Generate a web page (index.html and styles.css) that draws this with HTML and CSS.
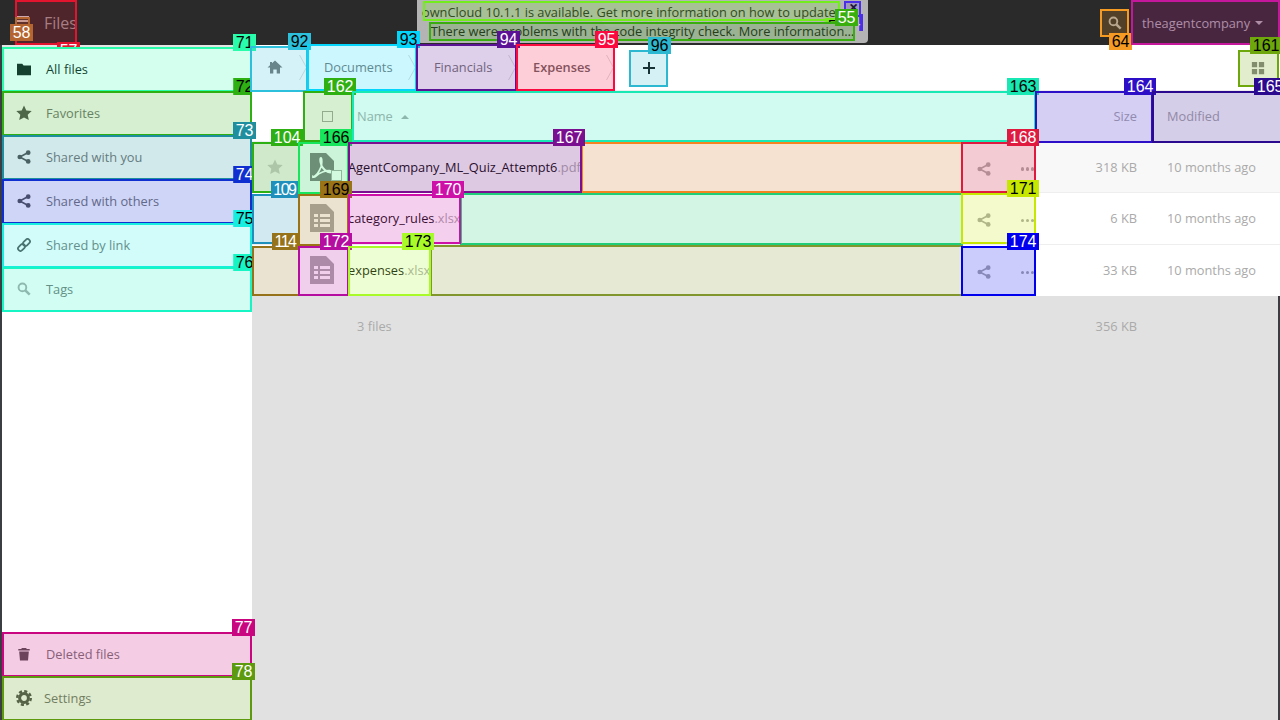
FILE: index.html
```html
<!DOCTYPE html>
<html lang="en">
<head>
  <meta charset="UTF-8" />
  <meta name="viewport" content="width=device-width, initial-scale=1.0" />
  <title>Files - ownCloud</title>
  <link rel="stylesheet" href="styles.css">
</head>
<body>
  <svg class="sprite" aria-hidden="true">
    <symbol id="i-folder" viewBox="0 0 16 16"><path d="M0 2h6l1.500 2H16v11H0z"/></symbol>
    <symbol id="i-star" viewBox="0 0 16 16"><path d="M8 .5l2.300 5 5.400.6-4 3.600 1.100 5.400L8 12.400l-4.800 2.700 1.100-5.400-4-3.600 5.400-.6z"/></symbol>
    <symbol id="i-share" viewBox="0 0 16 16"><path d="M3.200 8L12.800 2.900M3.200 8l9.600 5.100" fill="none" stroke="currentColor" stroke-width="1.800"/><circle cx="3.200" cy="8" r="2.700"/><circle cx="12.800" cy="3" r="2.700"/><circle cx="12.800" cy="13" r="2.700"/></symbol>
    <symbol id="i-link" viewBox="0 0 16 16"><g fill="none" stroke="currentColor" stroke-width="2"><rect x=".7" y="8.050" width="9" height="5.500" rx="2.750" transform="rotate(-45 5.200 10.800)"/><rect x="6.300" y="2.450" width="9" height="5.500" rx="2.750" transform="rotate(-45 10.800 5.200)"/></g></symbol>
    <symbol id="i-search" viewBox="0 0 16 16"><circle cx="6.200" cy="6.200" r="4.400" fill="none" stroke="currentColor" stroke-width="2.200"/><path d="M9.500 9.500l5 5" fill="none" stroke="currentColor" stroke-width="2.800"/></symbol>
    <symbol id="i-trash" viewBox="0 0 16 16"><path d="M5.500 1h5l.6 1.200H14.500V4h-13V2.200h3.400zM2.500 5h11l-.9 10.500H3.400z"/></symbol>
    <symbol id="i-gear" viewBox="0 0 16 16"><circle cx="8" cy="8" r="4.400" fill="none" stroke="currentColor" stroke-width="3"/><circle cx="8" cy="8" r="6.800" fill="none" stroke="currentColor" stroke-width="2.400" stroke-dasharray="3.100 2.240"/></symbol>
    <symbol id="i-home" viewBox="0 0 16 16"><path d="M8 1.500l7.500 7H13v6H9.700v-4H6.300v4H3v-6H.5l2.500-2.300V3h2v1.300z"/></symbol>
    <symbol id="i-grid" viewBox="0 0 16 16"><path d="M1 1h6v6H1zM9 1h6v6H9zM1 9h6v6H1zM9 9h6v6H9z"/></symbol>
    <symbol id="i-pdf" viewBox="0 0 24 28"><path d="M0 0h16l8 8v20H0z"/><path d="M3 24c3-1 6-5 8-10 1-3 1-8 .2-9-1.200-.6-1.500 3 0 7 2 4 5 7 9 7.500 1.800 0 1.500-1.700-.7-1.800-4-.2-10 2-13 5-2 2-3.500 1-3.500 1z" fill="none" stroke="#fff" stroke-width="1.800"/></symbol>
    <symbol id="i-sheet" viewBox="0 0 24 28"><path d="M0 0h16l8 8v20H0z"/><path d="M4 10h4v3H4zM10 10h10v3H10zM4 15h4v3H4zM10 15h10v3H10zM4 20h4v3H4zM10 20h10v3H10z" fill="#fff"/></symbol>
    <symbol id="i-chev" viewBox="0 0 8 25"><path d="M.5 0L7.500 12.500.5 25" fill="none" stroke="#ddd"/></symbol>
  </svg>

  <header class="topbar">
    <button class="menu-btn" aria-label="Menu"><span></span><span></span></button>
    <span class="app-name">Files</span>
    <div class="notify">
      <i class="notify-cloud"></i>
      <span class="notify-logo">ownCloud</span>
      <p class="notify-line first">ownCloud 10.1.1 is available. Get more information on how to update.</p>
      <p class="notify-line">There were problems with the code integrity check. More information…</p>
      <span class="notify-close">×</span>
    </div>
    <div class="topbar-right">
      <svg class="ic search-ic"><use href="#i-search"/></svg>
      <span class="user">theagentcompany <i class="caret"></i></span>
    </div>
  </header>

  <div class="app">
    <nav class="sidebar">
      <a class="nav-item active"><svg class="ic"><use href="#i-folder"/></svg>All files</a>
      <a class="nav-item"><svg class="ic star"><use href="#i-star"/></svg>Favorites</a>
      <a class="nav-item"><svg class="ic"><use href="#i-share"/></svg>Shared with you</a>
      <a class="nav-item"><svg class="ic"><use href="#i-share"/></svg>Shared with others</a>
      <a class="nav-item"><svg class="ic"><use href="#i-link"/></svg>Shared by link</a>
      <a class="nav-item tags"><svg class="ic"><use href="#i-search"/></svg>Tags</a>
      <a class="nav-item push"><svg class="ic"><use href="#i-trash"/></svg>Deleted files</a>
      <a class="nav-item settings"><svg class="ic"><use href="#i-gear"/></svg>Settings</a>
    </nav>

    <main class="content">
      <div class="files">
        <div class="controls">
          <a class="crumb crumb-home"><svg class="ic"><use href="#i-home"/></svg><svg class="chev"><use href="#i-chev"/></svg></a>
          <a class="crumb">Documents<svg class="chev"><use href="#i-chev"/></svg></a>
          <a class="crumb">Financials<svg class="chev"><use href="#i-chev"/></svg></a>
          <a class="crumb current">Expenses<svg class="chev"><use href="#i-chev"/></svg></a>
          <button class="add-btn" aria-label="New"><svg viewBox="0 0 12 12"><path d="M6 0v12M0 6h12"/></svg></button>
          <button class="view-btn" aria-label="Grid view"><svg class="ic"><use href="#i-grid"/></svg></button>
        </div>

        <div class="list-head">
          <div class="head-spacer"></div>
          <div class="head-check"><i class="check"></i></div>
          <div class="head-name">Name <i class="sort-up"></i></div>
          <div class="col-size">Size</div>
          <div class="col-date">Modified</div>
        </div>

        <div class="file-row hovered">
          <div class="col-fav"><svg class="ic"><use href="#i-star"/></svg></div>
          <div class="col-thumb pdf"><svg class="thumb"><use href="#i-pdf"/></svg><i class="check row-check"></i></div>
          <div class="col-name">AgentCompany_ML_Quiz_Attempt6<span class="ext">.pdf</span></div>
          <div class="col-actions"><svg class="ic"><use href="#i-share"/></svg><span class="dots"><i></i><i></i><i></i></span></div>
          <div class="col-size">318 KB</div>
          <div class="col-date">10 months ago</div>
        </div>
        <div class="file-row">
          <div class="col-fav"></div>
          <div class="col-thumb"><svg class="thumb"><use href="#i-sheet"/></svg></div>
          <div class="col-name">category_rules<span class="ext">.xlsx</span></div>
          <div class="col-actions"><svg class="ic"><use href="#i-share"/></svg><span class="dots"><i></i><i></i><i></i></span></div>
          <div class="col-size">6 KB</div>
          <div class="col-date">10 months ago</div>
        </div>
        <div class="file-row">
          <div class="col-fav"></div>
          <div class="col-thumb"><svg class="thumb"><use href="#i-sheet"/></svg></div>
          <div class="col-name">expenses<span class="ext">.xlsx</span></div>
          <div class="col-actions"><svg class="ic"><use href="#i-share"/></svg><span class="dots"><i></i><i></i><i></i></span></div>
          <div class="col-size">33 KB</div>
          <div class="col-date">10 months ago</div>
        </div>
      </div>

      <div class="summary">
        <div class="summary-count">3 files</div>
        <div class="col-size">356 KB</div>
        <div class="col-date"></div>
      </div>
    </main>
  </div>

  <!-- numbered annotation boxes drawn over the page -->
  <div class="marks">
    <div class="mark m53 dark"><b>53</b></div>
    <div class="mark m54"><b>54</b></div>
    <div class="mark m55"><b>55</b></div>
    <div class="mark m57"><b>57</b></div>
    <div class="mark m58"><b>58</b></div>
    <div class="mark m64 dark"><b>64</b></div>
    <div class="mark m65"></div>
    <div class="mark m71 dark"><b>71</b></div>
    <div class="mark m72 dark"><b>72</b></div>
    <div class="mark m73"><b>73</b></div>
    <div class="mark m74"><b>74</b></div>
    <div class="mark m75 dark"><b>75</b></div>
    <div class="mark m76 dark"><b>76</b></div>
    <div class="mark m77"><b>77</b></div>
    <div class="mark m78"><b>78</b></div>
    <div class="mark m92 dark"><b>92</b></div>
    <div class="mark m93 dark"><b>93</b></div>
    <div class="mark m94"><b>94</b></div>
    <div class="mark m95"><b>95</b></div>
    <div class="mark m96 dark"><b>96</b></div>
    <div class="mark m104"><b>104</b></div>
    <div class="mark bar1"></div>
    <div class="mark m109"><b>109</b></div>
    <div class="mark bar2"></div>
    <div class="mark m114"><b>114</b></div>
    <div class="mark bar3"></div>
    <div class="mark m161 dark"><b>161</b></div>
    <div class="mark m162"><b>162</b></div>
    <div class="mark m163 dark"><b>163</b></div>
    <div class="mark m164"><b>164</b></div>
    <div class="mark m165"><b>165</b></div>
    <div class="mark m166 dark"><b>166</b></div>
    <div class="mark m167"><b>167</b></div>
    <div class="mark m168"><b>168</b></div>
    <div class="mark m169 dark"><b>169</b></div>
    <div class="mark m170"><b>170</b></div>
    <div class="mark m171 dark"><b>171</b></div>
    <div class="mark m172"><b>172</b></div>
    <div class="mark m173 dark"><b>173</b></div>
    <div class="mark m174"><b>174</b></div>
  </div>
</body>
</html>
```

FILE: styles.css
```css
body {
  margin: 0;
  height: 720px;
  overflow: hidden;
  position: relative;
  background-color: #3a3d42;
  font-family: "Open Sans", sans-serif;
  font-size: 12.8px;
  color: #777;
}
.sprite {
  display: none;
}
.ic {
  width: 14px;
  height: 14px;
  fill: currentColor;
  flex: none;
}
p {
  margin: 0;
}
button {
  border: none;
  background: none;
  padding: 0;
}

/* top bar */
.topbar {
  display: flex;
  align-items: center;
  height: 45px;
  background-color: #2a2a2a;
  color: #fff;
}
.menu-btn {
  display: flex;
  flex-direction: column;
  gap: 2px;
  width: 12px;
  margin: -8px 15px 0 17px;
}
.menu-btn span {
  height: 2px;
  background-color: #ccc;
}
.app-name {
  font-size: 16px;
  color: #999;
}
.notify {
  position: absolute;
  left: 417px;
  top: 0;
  width: 451px;
  height: 43px;
  box-sizing: border-box;
  padding-top: 3px;
  background-color: #b4b4b4;
  border-radius: 0 0 4px 4px;
  color: #222;
  text-align: center;
  line-height: 18px;
  white-space: nowrap;
}
.notify-line {
  position: relative;
  height: 19px;
}
.notify-line.first {
  padding-right: 24px;
}
.notify-logo {
  position: absolute;
  left: 223px;
  top: 10px;
  color: #bababa;
  font-size: 17px;
}
.notify-cloud {
  position: absolute;
  left: 185px;
  top: 13px;
  width: 34px;
  height: 14px;
  border-radius: 8px;
  background-color: #bababa;
}
.notify-close {
  position: absolute;
  left: 432px;
  top: 0;
  font-size: 16px;
  line-height: 14px;
  font-weight: 700;
  color: #111;
}
.topbar-right {
  display: flex;
  align-items: center;
  margin-left: auto;
}
.search-ic {
  margin-right: 20px;
  color: #aaa;
}
.user {
  display: flex;
  align-items: center;
  gap: 5px;
  width: 138px;
  color: #aaa;
}
.caret {
  border: 4px solid transparent;
  border-top-color: #aaa;
  margin-top: 4px;
}

/* page */
.app {
  display: flex;
  height: 675px;
  padding: 0 2px;
}
.sidebar {
  display: flex;
  flex-direction: column;
  width: 250px;
  box-sizing: border-box;
  flex: none;
  background-color: #fff;
  border-top: 2px solid #e4e4e4;
}
.nav-item {
  display: flex;
  align-items: center;
  gap: 15px;
  height: 44px;
  padding-left: 15px;
  color: #777;
}
.nav-item .ic {
  color: #555;
}
.nav-item .star {
  width: 16px;
  height: 16px;
  margin: 0 -1px;
}
.nav-item.active,
.nav-item.active .ic {
  color: #111;
}
.tags .ic {
  color: #aaa;
}
.push {
  margin-top: auto;
}
.settings {
  padding-left: 14px;
  gap: 12px;
}
.settings .ic {
  width: 16px;
  height: 16px;
}

.content {
  flex: 1;
  background-color: #e1e1e1;
}
.files {
  margin-right: -2px;
  background-color: #fff;
}
.controls {
  display: flex;
  align-items: center;
  height: 46px;
  border-bottom: 1px solid #eee;
  box-sizing: border-box;
}
.crumb {
  display: flex;
  align-items: center;
  justify-content: space-between;
  box-sizing: border-box;
  height: 44px;
  margin-bottom: 1px;
  padding: 0 1px 0 16px;
  color: #777;
}
.crumb-home {
  padding-left: 15px;
}
.crumb-home .ic {
  width: 16px;
  height: 16px;
}
.chev {
  width: 8px;
  height: 25px;
  flex: none;
}
.crumb:nth-child(1) { width: 56px; }
.crumb:nth-child(2) { width: 109px; }
.crumb:nth-child(3) { width: 100px; padding-left: 17px; }
.crumb:nth-child(4) { width: 98px; }
.crumb.current {
  font-weight: 600;
  color: #666;
}
.add-btn {
  display: flex;
  align-items: center;
  justify-content: center;
  width: 39px;
  height: 37px;
  margin-left: 14px;
}
.add-btn svg {
  width: 12px;
  height: 12px;
  fill: none;
  stroke: #111;
  stroke-width: 2;
}
.view-btn {
  display: flex;
  margin-left: auto;
  margin-right: 15px;
  color: #888;
}

/* file list */
.list-head {
  display: flex;
  align-items: center;
  height: 51px;
  box-sizing: border-box;
  border-bottom: 1px solid #eee;
  color: #aaa;
}
.head-spacer {
  width: 50px;
}
.head-check {
  display: flex;
  justify-content: center;
  width: 50px;
}
.head-name {
  flex: 1;
  padding-left: 5px;
}
.check {
  display: block;
  width: 9px;
  height: 9px;
  border: 1px solid #aaa;
  background-color: #fff;
}
.sort-up {
  display: inline-block;
  margin-left: 5px;
  border: 4px solid transparent;
  border-top: 0;
  border-bottom: 4px solid #aaa;
  vertical-align: 2px;
}
.col-size {
  width: 118px;
  box-sizing: border-box;
  padding-right: 16px;
  text-align: right;
  color: #aaa;
}
.col-date {
  width: 127px;
  box-sizing: border-box;
  padding-left: 14px;
  color: #aaa;
}
.file-row {
  display: flex;
  align-items: center;
  height: 51.33px;
  box-sizing: border-box;
  border-bottom: 1px solid #eee;
}
.file-row.hovered {
  background-color: #f8f8f8;
}
.file-row:last-child {
  border-bottom: none;
}
.col-fav {
  display: flex;
  justify-content: center;
  width: 46px;
  color: #ccc;
}
.col-fav .ic {
  width: 16px;
  height: 16px;
}
.col-thumb {
  position: relative;
  display: flex;
  width: 50px;
  padding-left: 12px;
  box-sizing: border-box;
  color: #aaa;
}
.col-thumb.pdf {
  color: #827a80;
}
.thumb {
  width: 24px;
  height: 28px;
  fill: currentColor;
}
.row-check {
  position: absolute;
  left: 33px;
  top: 17px;
}
.col-name {
  flex: 1;
  color: #111;
}
.ext {
  color: #aaa;
}
.col-actions {
  display: flex;
  align-items: center;
  justify-content: space-between;
  width: 57px;
  margin: 4px 1px 0 0;
  color: #aaa;
}
.dots {
  display: flex;
  gap: 1.5px;
}
.dots i {
  width: 3.5px;
  height: 3.5px;
  border-radius: 50%;
  background-color: #aaa;
}
.summary {
  display: flex;
  margin-right: -2px;
  padding-top: 21px;
  color: #999;
}
.summary-count {
  flex: 1;
  padding-left: 105px;
  color: #aaa;
}

/* annotation boxes */
.mark {
  position: absolute;
  box-sizing: border-box;
  border: 2px solid var(--c);
  background-color: color-mix(in srgb, var(--c) 20%, transparent);
}
.mark b {
  position: absolute;
  right: -5px;
  top: -15px;
  height: 17px;
  padding: 0 2.5px;
  background-color: var(--c);
  color: #fff;
  font: 400 16px/17px "Liberation Sans", sans-serif;
}
.mark.dark b {
  color: #000;
}

.m53 { --c: #73ee1c; left: 423px; top: 1px; width: 417px; height: 20px; }
.m53 b { top: 15px; right: -10px; height: 4px; overflow: hidden; }
.m54 { --c: #4b2ee8; left: 844px; top: 1px; width: 17px; height: 16px; }
.m54 b { top: 11px; right: -4px; clip-path: inset(0 0 0 19px); }
.m55 { --c: #39ae0f; left: 429px; top: 22px; width: 426px; height: 19px; }
.m57 { --c: #e3142e; left: 15px; top: 0; width: 62px; height: 45px; }
.m57 b { top: 40px; right: -5px; height: 5px; overflow: hidden; }
.m58 { --c: #b5652f; left: 15px; top: 17px; width: 15px; height: 24px; }
.m58 b { top: 5px; right: -5px; }
.m64 { --c: #f59b23; left: 1100px; top: 9px; width: 29px; height: 28px; }
.m64 b { top: 22px; right: -5px; }
.m65 { --c: #c5179b; left: 1131px; top: 0; width: 149px; height: 45px; }

.m71 { --c: #29fcab; left: 2px; top: 47px; width: 250px; height: 45px; }
.m72 { --c: #2eb012; left: 2px; top: 91px; width: 250px; height: 45px; }
.m73 { --c: #1f8f9f; left: 2px; top: 135px; width: 250px; height: 45px; }
.m74 { --c: #0f2fd0; left: 2px; top: 179px; width: 250px; height: 45px; }
.m75 { --c: #17eee0; left: 2px; top: 223px; width: 250px; height: 45px; }
.m76 { --c: #17f5c5; left: 2px; top: 267px; width: 250px; height: 45px; }
.m77 { --c: #c9057f; left: 2px; top: 632px; width: 250px; height: 45px; }
.m78 { --c: #5e9a0d; left: 2px; top: 676px; width: 250px; height: 45px; }
.m71 b, .m73 b { right: -6px; }
/* these tags run under the boxes to their right */
.m72 b, .m74 b, .m75 b, .m76 b { right: -6px; clip-path: inset(0 4px 0 0); }

.m92 { --c: #2cc0dc; left: 250px; top: 46px; width: 58px; height: 46px; }
.m93 { --c: #05d5fb; left: 307px; top: 44px; width: 110px; height: 47px; }
.m94 { --c: #5c1295; left: 416px; top: 44px; width: 101px; height: 47px; }
.m95 { --c: #fa0a3e; left: 516px; top: 44px; width: 99px; height: 47px; }
.m96 { --c: #2cb8d0; left: 629px; top: 50px; width: 39px; height: 37px; }

.m104 { --c: #2eb012; left: 252px; top: 142px; width: 48px; height: 51px; }
.bar1 { --c: #f5831f; left: 581px; top: 142px; width: 382px; height: 51px; background-color: #f6e2d0; }
.m109 { --c: #1f8fbb; left: 252px; top: 194px; width: 48px; height: 50px; }
.bar2 { --c: #1fcc78; left: 460px; top: 193px; width: 503px; height: 52px; }
.m114 { --c: #96731a; left: 252px; top: 246px; width: 48px; height: 50px; }
.bar3 { --c: #82962e; left: 430px; top: 245px; width: 533px; height: 51px; }
.m109 b, .m114 b { right: 0; letter-spacing: -1.5px; }

.m161 { --c: #6ea70c; left: 1238px; top: 50px; width: 41px; height: 37px; }
.m162 { --c: #2eb012; left: 303px; top: 91px; width: 50px; height: 51px; }
.m163 { --c: #17e8b4; left: 352px; top: 91px; width: 684px; height: 51px; }
.m164 { --c: #2d0fc8; left: 1035px; top: 91px; width: 118px; height: 52px; }
.m165 { --c: #2b0a8f; left: 1152px; top: 91px; width: 131px; height: 52px; }
.m166 { --c: #17e65c; left: 298px; top: 142px; width: 51px; height: 52px; }
.m167 { --c: #7a108f; left: 348px; top: 142px; width: 234px; height: 51px; }
.m168 { --c: #e01a3f; left: 961px; top: 142px; width: 75px; height: 51px; }
.m169 { --c: #9a7316; left: 298px; top: 194px; width: 51px; height: 52px; }
.m170 { --c: #cc10a8; left: 348px; top: 194px; width: 113px; height: 50px; }
.m171 { --c: #c6e800; left: 961px; top: 193px; width: 75px; height: 51px; }
.m172 { --c: #b50da0; left: 298px; top: 246px; width: 51px; height: 50px; }
.m173 { --c: #a8fa28; left: 348px; top: 246px; width: 83px; height: 50px; }
.m174 { --c: #0000ee; left: 961px; top: 246px; width: 75px; height: 50px; }
```
